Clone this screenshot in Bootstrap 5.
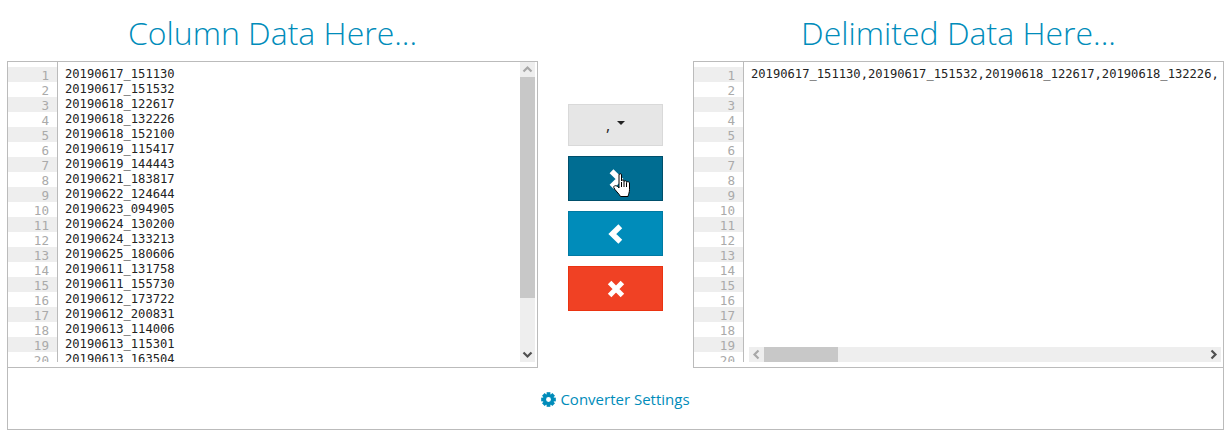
<!DOCTYPE html>
<html lang="en">
<head>
<meta charset="utf-8">
<title>Column to Delimited Converter</title>
<link rel="stylesheet" href="https://cdn.jsdelivr.net/npm/bootstrap@5.3.0/dist/css/bootstrap.min.css">
<style>
body{font-family:"Open Sans",sans-serif;background:#fff;color:#222;overflow:hidden}
.conv-page{width:1217px;margin-left:7px}
.conv-side{width:531px}
.conv-title{height:61px;margin:0;font-family:"Open Sans",sans-serif;font-weight:300;font-size:32px;line-height:66px;color:#008cba;text-align:center}
.conv-panel{height:307px;border:1px solid #bbb}
.conv-editor{height:300px;overflow:hidden;font-family:"DejaVu Sans Mono",monospace;font-size:12.15px;line-height:15px;padding-right:2px}
.conv-gutter{width:50px;flex:none;border-right:1px solid #bbb;padding-top:5px;color:#aaa;text-align:right;overflow:hidden;font-size:12.6px}
.conv-gutter div{height:15px;padding-right:8px;padding-top:1px}
.conv-gutter div:nth-child(odd){background:#eee}
.conv-code{padding:5px 0 0 7px;white-space:pre;overflow:hidden;color:#222;min-width:0}
.conv-mid{width:155px;padding-top:104px;gap:10px}
.conv-btn{width:95px;height:45px;padding:0;border-radius:0;display:flex;align-items:center;justify-content:center;--bs-btn-border-width:1px;color:#fff;position:relative}
.conv-sep{height:42px;background:#e6e6e6;border-color:#d9d9d9;color:#222;font-size:16px}
.conv-sep.dropdown-toggle::after{margin-left:7px;border-top-width:4px;border-left-width:4px;border-right-width:4px;position:relative;top:-2px}
.conv-sep:hover{background:#e6e6e6;border-color:#d9d9d9;color:#222}
.conv-to{background:#006d92;border-color:#004f6b}
.conv-to:hover{background:#006d92;border-color:#004f6b}
.conv-from{background:#008cba;border-color:#007aa3}
.conv-from:hover{background:#008cba;border-color:#007aa3}
.conv-clear{background:#f04124;border-color:#ea3311}
.conv-clear:hover{background:#f04124;border-color:#ea3311}
.conv-hand{position:absolute;left:44px;top:16px}
.conv-vbar{width:15px;flex:none;height:300px;background:#eee}
.conv-arrow{height:15px;flex:none}
.conv-hbar{height:15px;flex:none;background:#eee;margin:0 0 0 5px}
.conv-harrow{width:15px;flex:none}
.conv-thumb{background:#c8c8c8}
.conv-vthumb{height:221px}
.conv-hthumb{width:74px}
.conv-foot{height:62px;border:1px solid #bbb;border-top:0;font-size:15px;padding-top:1px}
.conv-link{color:#008cba;text-decoration:none;gap:4px}
.conv-link:hover{color:#008cba}
</style>
</head>
<body>
<div class="conv-page">
  <div class="d-flex">
    <div class="conv-side">
      <h2 class="conv-title">Column Data Here...</h2>
      <div class="conv-panel">
        <div class="conv-editor d-flex">
          <div class="conv-gutter"><div>1</div><div>2</div><div>3</div><div>4</div><div>5</div><div>6</div><div>7</div><div>8</div><div>9</div><div>10</div><div>11</div><div>12</div><div>13</div><div>14</div><div>15</div><div>16</div><div>17</div><div>18</div><div>19</div><div>20</div></div>
          <div class="conv-code flex-grow-1">20190617_151130
20190617_151532
20190618_122617
20190618_132226
20190618_152100
20190619_115417
20190619_144443
20190621_183817
20190622_124644
20190623_094905
20190624_130200
20190624_133213
20190625_180606
20190611_131758
20190611_155730
20190612_173722
20190612_200831
20190613_114006
20190613_115301
20190613_163504</div>
          <div class="conv-vbar d-flex flex-column">
            <div class="conv-arrow"><svg width="15" height="15" viewBox="0 0 15 15"><path d="M3.5 9.5 7.5 5.5 11.5 9.5" fill="none" stroke="#a8a8a8" stroke-width="2.2"/></svg></div>
            <div class="conv-thumb conv-vthumb"></div>
            <div class="flex-grow-1"></div>
            <div class="conv-arrow"><svg width="15" height="15" viewBox="0 0 15 15"><path d="M3.5 5.5 7.5 9.5 11.5 5.5" fill="none" stroke="#505050" stroke-width="2.2"/></svg></div>
          </div>
        </div>
      </div>
    </div>
    <div class="conv-mid d-flex flex-column align-items-center">
      <button type="button" class="btn conv-btn conv-sep dropdown-toggle">,</button>
      <button type="button" class="btn conv-btn conv-to" aria-label="Convert to delimited">
        <svg width="16" height="20" viewBox="0 0 16 20"><path d="M3.500 2.200 11.500 10 3.500 17.800" fill="none" stroke="#fff" stroke-width="5.500"/></svg>
        <svg class="conv-hand" width="18" height="24" viewBox="0 0 18 24"><path d="M6 12.500V2C6 .2 8.500 .2 8.500 2V8C8.500 6.600 11 6.600 11 8V8.700C11 7.400 13.500 7.400 13.500 8.700V9.500C13.500 8.400 16.500 8.400 16.500 10V16.500C16.500 19.500 15.500 21 15 23.500H7.500C6.500 21 1.500 17 .8 14.500C.3 12.500 3.500 11.500 6 15Z" fill="#fff" stroke="#000"/><path d="M8.500 9V14M11 9V14M13.500 10V14" stroke="#000" fill="none"/></svg>
      </button>
      <button type="button" class="btn conv-btn conv-from" aria-label="Convert to column">
        <svg width="16" height="20" viewBox="0 0 16 20"><path d="M12.300 2.200 4.300 10 12.300 17.800" fill="none" stroke="#fff" stroke-width="5.500"/></svg>
      </button>
      <button type="button" class="btn conv-btn conv-clear" aria-label="Clear">
        <svg width="18" height="18" viewBox="0 0 18 18"><path d="M2.600 2.600 15.400 15.400M15.400 2.600 2.600 15.400" fill="none" stroke="#fff" stroke-width="5"/></svg>
      </button>
    </div>
    <div class="conv-side">
      <h2 class="conv-title">Delimited Data Here...</h2>
      <div class="conv-panel">
        <div class="conv-editor d-flex">
          <div class="conv-gutter"><div>1</div><div>2</div><div>3</div><div>4</div><div>5</div><div>6</div><div>7</div><div>8</div><div>9</div><div>10</div><div>11</div><div>12</div><div>13</div><div>14</div><div>15</div><div>16</div><div>17</div><div>18</div><div>19</div><div>20</div></div>
          <div class="d-flex flex-column flex-grow-1" style="min-width:0">
            <div class="conv-code flex-grow-1">20190617_151130,20190617_151532,20190618_122617,20190618_132226,</div>
            <div class="conv-hbar d-flex">
              <div class="conv-harrow"><svg width="15" height="15" viewBox="0 0 15 15"><path d="M9.500 3.500 5.500 7.500 9.500 11.500" fill="none" stroke="#a8a8a8" stroke-width="2.200"/></svg></div>
              <div class="conv-thumb conv-hthumb"></div>
              <div class="flex-grow-1"></div>
              <div class="conv-harrow"><svg width="15" height="15" viewBox="0 0 15 15"><path d="M5.500 3.500 9.500 7.500 5.500 11.500" fill="none" stroke="#505050" stroke-width="2.200"/></svg></div>
            </div>
          </div>
        </div>
      </div>
    </div>
  </div>
  <div class="conv-foot d-flex align-items-center justify-content-center">
    <a href="#" class="conv-link d-inline-flex align-items-center">
      <svg width="15" height="15" viewBox="0 0 16 16"><g fill="#008cba"><rect x="6" y=".2" width="4" height="3.500"/><rect x="6" y=".2" width="4" height="3.500" transform="rotate(45 8 8)"/><rect x="6" y=".2" width="4" height="3.500" transform="rotate(90 8 8)"/><rect x="6" y=".2" width="4" height="3.500" transform="rotate(135 8 8)"/><rect x="6" y=".2" width="4" height="3.500" transform="rotate(180 8 8)"/><rect x="6" y=".2" width="4" height="3.500" transform="rotate(225 8 8)"/><rect x="6" y=".2" width="4" height="3.500" transform="rotate(270 8 8)"/><rect x="6" y=".2" width="4" height="3.500" transform="rotate(315 8 8)"/></g><circle cx="8" cy="8" r="4.300" fill="none" stroke="#008cba" stroke-width="3.400"/></svg>
      <span>Converter Settings</span>
    </a>
  </div>
</div>
</body>
</html>
